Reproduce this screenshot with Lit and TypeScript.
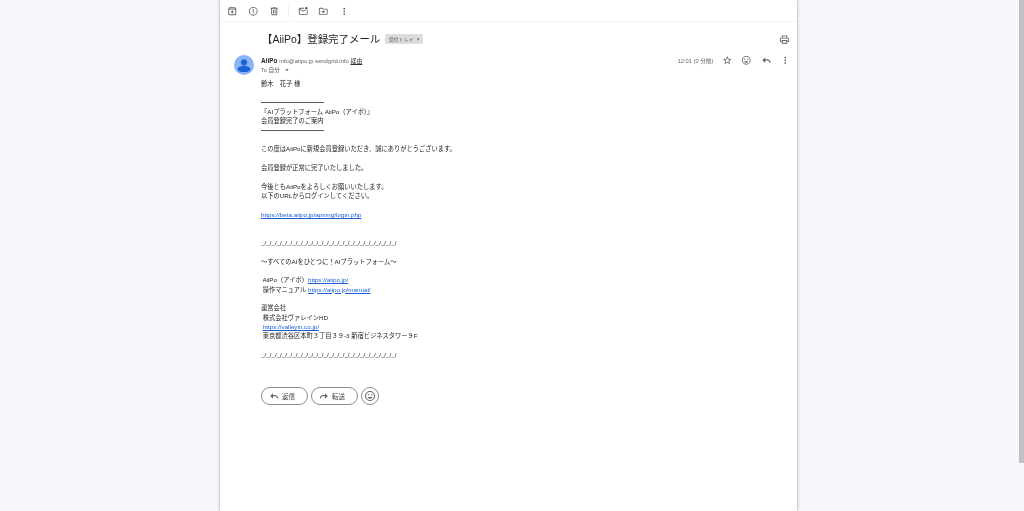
import { LitElement, html, css, svg } from "lit";
import { customElement } from "lit/decorators.js";

const P = {
  archive: "M20.54 5.23l-1.39-1.68C18.88 3.21 18.47 3 18 3H6c-.47 0-.88.21-1.16.55L3.46 5.23C3.17 5.57 3 6.02 3 6.5V19c0 1.1.9 2 2 2h14c1.1 0 2-.9 2-2V6.5c0-.48-.17-.93-.46-1.27zM6.24 5h11.52l.83 1H5.42l.82-1zM5 19V8h14v11H5zm8.45-9h-2.9v3H8l4 4 4-4h-2.55z",
  report: "M12 2a10 10 0 1 0 0 20 10 10 0 0 0 0-20zm0 18a8 8 0 1 1 0-16 8 8 0 0 1 0 16zm-1-13h2v7h-2zm0 8h2v2h-2z",
  trash: "M15 4V3H9v1H4v2h1v13c0 1.1.9 2 2 2h10c1.1 0 2-.9 2-2V6h1V4h-5zm2 15H7V6h10v13zM9 8h2v9H9zm4 0h2v9h-2z",
  unread: "M22 8.98V18c0 1.1-.9 2-2 2H4c-1.1 0-2-.9-2-2V6c0-1.1.9-2 2-2h10.1c-.06.32-.1.66-.1 1s.04.68.1 1H4l8 5 3.67-2.29c.47.43 1.02.76 1.63.98L12 13 4 8v10h16V9.9c.74-.15 1.42-.48 2-.92zM16 5c0 1.66 1.34 3 3 3s3-1.34 3-3-1.34-3-3-3-3 1.34-3 3z",
  move: "M20 6h-8l-2-2H4c-1.1 0-2 .9-2 2v12c0 1.1.9 2 2 2h16c1.1 0 2-.9 2-2V8c0-1.1-.9-2-2-2zm0 12H4V6h5.17l2 2H20v10zm-8-1l4-4-4-4v3H8v2h4v3z",
  more: "M12 8a2 2 0 1 0 0-4 2 2 0 0 0 0 4zm0 2a2 2 0 1 0 0 4 2 2 0 0 0 0-4zm0 6a2 2 0 1 0 0 4 2 2 0 0 0 0-4z",
  print: "M19 8h-1V3H6v5H5c-1.66 0-3 1.34-3 3v6h4v4h12v-4h4v-6c0-1.66-1.34-3-3-3zM8 5h8v3H8V5zm8 14H8v-4h8v4zm2-4v-2H6v2H4v-4c0-.55.45-1 1-1h14c.55 0 1 .45 1 1v4h-2z",
  star: "M22 9.24l-7.19-.62L12 2 9.19 8.63 2 9.24l5.46 4.73L5.82 21 12 17.27 18.18 21l-1.63-7.03L22 9.24zM12 15.4l-3.76 2.27 1-4.28-3.32-2.88 4.38-.38L12 6.1l1.71 4.04 4.38.38-3.32 2.88 1 4.28L12 15.4z",
  emoji: "M12 2a10 10 0 1 0 0 20 10 10 0 0 0 0-20zm0 18a8 8 0 1 1 0-16 8 8 0 0 1 0 16zM8.5 11a1.5 1.5 0 1 0 0-3 1.5 1.5 0 0 0 0 3zm7 0a1.5 1.5 0 1 0 0-3 1.5 1.5 0 0 0 0 3zM12 17.5c2.33 0 4.31-1.46 5.11-3.5H6.89c.8 2.04 2.78 3.5 5.11 3.5z",
  reply: "M9.5 9.5V5.5L3 12l6.5 6.5v-6H14c2.8 0 4.6 1.5 5.6 5.5H22c-.7-5.5-3.5-8.5-8-8.5H9.5z",
  forward: "M14.5 9.5V5.5L21 12l-6.5 6.5v-6H10c-2.8 0-4.6 1.5-5.6 5.5H2c.7-5.5 3.5-8.5 8-8.5h4.5z",
  drop: "M7 10l5 5 5-5z",
};

const icon = (d: string, cls = "ic") =>
  html`<svg class=${cls} viewBox="0 0 24 24">${svg`<path d=${d}></path>`}</svg>`;

const pat = "_/".repeat(26);
const link = (href: string) => html`<a>${href}</a>`;

const lines = [
  "鈴木　花子 様",
  "",
  "RULE",
  "『AIプラットフォーム AiiPo（アイポ）』",
  "会員登録完了のご案内",
  "RULE",
  "",
  "この度はAiiPoに新規会員登録いただき、誠にありがとうございます。",
  "",
  "会員登録が正常に完了いたしました。",
  "",
  "今後ともAiiPoをよろしくお願いいたします。",
  "以下のURLからログインしてください。",
  "",
  link("https://beta.aiipo.jp/apmng/login.php"),
  "",
  "",
  pat,
  "",
  "〜すべてのAIをひとつに！AIプラットフォーム〜",
  "",
  html` AiiPo（アイポ）${link("https://aiipo.jp/")}`,
  html` 操作マニュアル ${link("https://aiipo.jp/manual/")}`,
  "",
  "運営会社",
  " 株式会社ヴァレインHD",
  html` ${link("https://valleyin.co.jp/")}`,
  " 東京都渋谷区本町３丁目３９-3 新宿ビジネスタワー９F",
  "",
  pat,
];

@customElement("app-root")
export class AppRoot extends LitElement {
  static styles = css`
    :host {
      display: flex;
      height: 511px;
      overflow: hidden;
      background: #f6f8fc;
      font-family: "Liberation Sans", "Noto Sans CJK JP", sans-serif;
      color: #222;
      position: relative;
    }
    .panel {
      margin-left: 220px;
      width: 577px;
      height: 511px;
      background: #fff;
      box-shadow: 0 0 3px rgba(60, 64, 67, 0.5);
      display: flex;
      flex-direction: column;
      filter: blur(0.4px);
    }
    .ic { width: 10.5px; height: 10.5px; fill: #5f6368; display: block; flex: none; }
    .toolbar {
      height: 22px;
      box-sizing: border-box;
      border-bottom: 1px solid #f3f4f5;
      display: flex;
      align-items: center;
      padding: 1px 0 0 1.5px;
    }
    .slot { width: 21px; display: flex; justify-content: center; }
    .sep { width: 1px; height: 11px; background: #eceded; margin: 0 4px 0 3px; }
    .tslot { width: 20.5px; display: flex; justify-content: center; }
    .subject {
      display: flex;
      align-items: center;
      height: 30px;
      padding: 2px 7.5px 0 42px;
      box-sizing: border-box;
    }
    .subject h1 {
      margin: 0;
      font-weight: 400;
      font-size: 10.45px;
      color: #1f1f1f;
      white-space: pre;
    }
    .subject .ic { margin-top: 2px; width: 11px; height: 11px; }
    .label {
      margin: 1px 0 0 5px;
      width: 38px;
      height: 10px;
      box-sizing: border-box;
      background: #dddddd;
      border-radius: 1.5px;
      font-size: 5px;
      color: #5f5f5f;
      display: flex;
      align-items: center;
      justify-content: center;
      gap: 3px;
      white-space: pre;
    }
    .label i { font-style: normal; font-size: 5px; color: #444; }
    .grow { flex: 1; }
    .sender { display: flex; padding: 3px 2px 0 14px; }
    .avatar { width: 20px; height: 20px; flex: none; display: block; }
    .who { margin-left: 7px; flex: 1; }
    .line1 { display: flex; align-items: center; height: 9px; margin-top: 1px; white-space: pre; font-size: 5.9px; color: #5f6368; }
    .line1 b { font-size: 6.4px; font-weight: 700; color: #1f1f1f; margin-right: 2px; }
    .line1 u { color: #333; margin-left: 0; }
    .line2 { display: flex; align-items: center; height: 9px; font-size: 5.7px; color: #5f6368; white-space: pre; }
    .drop { width: 8px; height: 8px; fill: #444; margin-left: 1px; }
    .tools { display: flex; align-items: center; height: 9px; margin-top: 1px; }
    .time { font-size: 5.7px; color: #5f6368; margin-right: 4px; }
    .t { width: 19.4px; display: flex; justify-content: center; }
    .t .ic { width: 10.5px; height: 10.5px; }
    .body { margin: 4px 0 0 41px; font-size: 6.25px; line-height: 9.35px; color: #222; }
    .l { height: 9.35px; white-space: pre; }
    .rule { display: flex; align-items: center; }
    .rule span { display: block; width: 63px; height: 1px; background: #5a5a5a; }
    a { color: #1a5fd0; text-decoration: underline; }
    .actions { display: flex; gap: 3px; margin: 27.5px 0 0 41px; }
    .btn {
      width: 47px;
      height: 18px;
      box-sizing: border-box;
      border: 1px solid #8a8d91;
      border-radius: 9px;
      display: flex;
      align-items: center;
      padding-left: 7px;
      gap: 3px;
      font-size: 6.5px;
      color: #444;
    }
    .btn .ic { width: 10px; height: 10px; }
    .round { width: 18px; padding: 0; justify-content: center; }
    .round .ic { width: 12px; height: 12px; }
    .scroll {
      position: absolute;
      right: 0.5px;
      top: 0;
      width: 4.5px;
      height: 463px;
      background: #c1c1c5;
    }
  `;

  render() {
    return html`
      <div class="panel">
        <div class="toolbar">
          <span class="slot">${icon(P.archive)}</span>
          <span class="slot">${icon(P.report)}</span>
          <span class="slot">${icon(P.trash)}</span>
          <span class="sep"></span>
          <span class="tslot">${icon(P.unread)}</span>
          <span class="tslot">${icon(P.move)}</span>
          <span class="tslot">${icon(P.more)}</span>
        </div>
        <div class="subject">
          <h1>【AiiPo】登録完了メール</h1>
          <span class="label">受信トレイ<i>×</i></span>
          <span class="grow"></span>
          ${icon(P.print)}
        </div>
        <div class="sender">
          <svg class="avatar" viewBox="0 0 20 20">
            <circle cx="10" cy="10" r="10" fill="#8ab4f8"></circle>
            <circle cx="10" cy="7.3" r="3.1" fill="#1a66d6"></circle>
            <path d="M3.6 14.2c0-2.2 3.8-3.4 6.4-3.4s6.4 1.2 6.4 3.4c0 1.7-2.8 2.9-6.4 2.9s-6.4-1.2-6.4-2.9z" fill="#1a66d6"></path>
          </svg>
          <div class="who">
            <div class="line1"><b>AiiPo</b>info@aiipo.jp sendgrid.info <u>経由</u></div>
            <div class="line2">To 自分 ${icon(P.drop, "drop")}</div>
          </div>
          <div class="tools">
            <span class="time">12:01 (0 分前)</span>
            <span class="t">${icon(P.star)}</span>
            <span class="t">${icon(P.emoji)}</span>
            <span class="t">${icon(P.reply)}</span>
            <span class="t">${icon(P.more)}</span>
          </div>
        </div>
        <div class="body">
          ${lines.map((t) =>
            t === "RULE"
              ? html`<div class="l rule"><span></span></div>`
              : html`<div class="l">${t}</div>`
          )}
        </div>
        <div class="actions">
          <div class="btn">${icon(P.reply)}返信</div>
          <div class="btn">${icon(P.forward)}転送</div>
          <div class="btn round">${icon(P.emoji)}</div>
        </div>
      </div>
      <div class="scroll"></div>
    `;
  }
}
